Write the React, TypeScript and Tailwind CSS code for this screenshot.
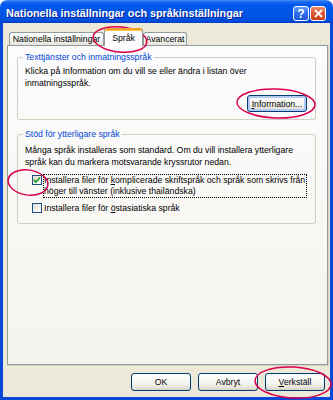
import React from "react";

function Check({ checked }: { checked?: boolean }) {
  return (
    <div className="w-[10px] h-[10px] shrink-0 border border-[#1c5180] bg-[linear-gradient(135deg,#dcdcd7_0%,#f4f4f0_60%,#ffffff_100%)] flex items-center justify-center">
      {checked && (
        <svg width="8" height="8" viewBox="0 0 8 8">
          <path d="M1 4 L3 6 L7 1.5" stroke="#21a121" strokeWidth="1.8" fill="none" />
        </svg>
      )}
    </div>
  );
}

function XPButton({ children, focused }: { children: React.ReactNode; focused?: boolean }) {
  return (
    <div
      className={
        "w-[60px] h-full rounded-[3px] border border-[#003c74] bg-[linear-gradient(to_bottom,#ffffff_0%,#f3f3ef_60%,#e2dfd4_90%,#d6d0c5_100%)] flex items-center justify-center text-black " +
        (focused ? "shadow-[inset_0_0_0_2px_#b3cbf3]" : "")
      }
    >
      {children}
    </div>
  );
}

export default function App() {
  return (
    <div className="relative w-[333px] h-[400px] bg-white font-['Liberation_Sans',Arial,sans-serif] text-[8.7px] leading-[12px] text-black overflow-hidden">
      <div className="flex flex-col w-full h-full">
        {/* Title bar */}
        <div className="h-[23px] shrink-0 rounded-t-[7px] bg-[linear-gradient(to_bottom,#4a8ff5_0%,#1c6cf0_8%,#0058ee_20%,#0055e5_60%,#0050e0_85%,#003fc8_100%)] flex items-start pl-[6px] pr-[7px] pt-[6px]">
          <div className="flex-1 text-white font-bold text-[10.8px] leading-[15px] [text-shadow:1px_1px_0_#0a1e8c] whitespace-nowrap">
            Nationella inställningar och språkinställningar
          </div>
          <div className="flex gap-[1px]">
            <div className="w-[16px] h-[15px] rounded-[3px] border border-white bg-[linear-gradient(to_bottom,#5d9cfa_0%,#2f6ff0_50%,#1d55d8_100%)] flex items-center justify-center text-white font-bold text-[12px] leading-none">
              ?
            </div>
            <div className="w-[16px] h-[15px] rounded-[3px] border border-white bg-[linear-gradient(to_bottom,#eb8a6b_0%,#e05a35_45%,#c93c17_100%)] flex items-center justify-center">
              <svg width="9" height="9" viewBox="0 0 9 9">
                <path d="M1 1 L8 8 M8 1 L1 8" stroke="white" strokeWidth="1.8" />
              </svg>
            </div>
          </div>
        </div>

        {/* Body */}
        <div className="flex-1 flex flex-col bg-[#ece9d8] border-x-[3px] border-b-[3px] border-[#0a48d8] pt-[5px]">
          {/* Tabs */}
          <div className="h-[17px] flex items-end pl-[6px]">
            <div className="w-[95px] h-[13px] rounded-t-[3px] border border-b-0 border-[#919b9c] bg-[linear-gradient(to_bottom,#ffffff_0%,#f3f3ef_60%,#e6e4db_100%)] flex items-center justify-center whitespace-nowrap">
              Nationella inställningar
            </div>
            <div className="relative z-10 -mb-[1px] w-[39px] h-[18px] rounded-t-[3px] border-x border-[#919b9c] border-t-[2px] border-t-[#f0a030] bg-[#fcfcfe] flex items-center justify-center shadow-[inset_0_1px_0_#ffc83c]">
              Språk
            </div>
            <div className="w-[44px] h-[13px] rounded-t-[3px] border border-b-0 border-[#919b9c] bg-[linear-gradient(to_bottom,#ffffff_0%,#f3f3ef_60%,#e6e4db_100%)] flex items-center justify-center">
              Avancerat
            </div>
          </div>

          {/* Panel */}
          <div className="h-[320px] ml-[4px] mr-[2px] border border-[#919b9c] bg-[linear-gradient(to_bottom,#fcfcfe_0%,#f8f7f3_60%,#f4f3ee_100%)] shadow-[1px_1px_0_#d4d1c4] pt-[5px] pl-[9px] pr-[11px] flex flex-col">
            <fieldset className="border border-[#d0d0bf] rounded-[3px] px-[7px] pb-[7px] flex flex-col">
              <legend className="px-[2px] -ml-[2px] text-[#0046d5] leading-[12px]">
                Texttjänster och inmatningsspråk
              </legend>
              <div className="pt-[2px] whitespace-nowrap">
                Klicka på Information om du vill se eller ändra i listan över
                <br />
                inmatningsspråk.
              </div>
              <div className="mt-[6px] h-[17px] self-end mr-[1px]">
                <XPButton focused>
                  <span>
                    <span className="underline">I</span>nformation...
                  </span>
                </XPButton>
              </div>
            </fieldset>

            <fieldset className="mt-[8px] border border-[#d0d0bf] rounded-[3px] px-[7px] pb-[8px] flex flex-col">
              <legend className="px-[2px] -ml-[2px] text-[#0046d5] leading-[12px]">
                Stöd för ytterligare språk
              </legend>
              <div className="pt-[4px] whitespace-nowrap">
                Många språk installeras som standard. Om du vill installera ytterligare
                <br />
                språk kan du markera motsvarande kryssrutor nedan.
              </div>
              <div className="mt-[6px] ml-[7px] flex items-start">
                <div className="mt-[1px]">
                  <Check checked />
                </div>
                <div className="ml-[1px] mr-[1px] flex-1 border border-dotted border-black whitespace-nowrap leading-[11px] py-[0px]">
                  Installera filer för <span className="underline">k</span>omplicerade skriftspråk och språk som skrivs från
                  <br />
                  höger till vänster (inklusive thailändska)
                </div>
              </div>
              <div className="mt-[4px] ml-[7px] flex items-start">
                <div className="mt-[1px]">
                  <Check />
                </div>
                <div className="ml-[1px] border border-transparent whitespace-nowrap leading-[11px]">
                  Installera filer för <span className="underline">ö</span>stasiatiska språk
                </div>
              </div>
            </fieldset>
          </div>

          {/* Bottom buttons */}
          <div className="mt-[8px] h-[18px] flex justify-end gap-[7px] pr-[5px]">
            <XPButton>OK</XPButton>
            <XPButton>Avbryt</XPButton>
            <XPButton>
              <span>
                <span className="underline">V</span>erkställ
              </span>
            </XPButton>
          </div>
        </div>
      </div>

      {/* Red annotation ellipses */}
      <svg className="absolute inset-0 pointer-events-none" width="333" height="400" viewBox="0 0 333 400">
        <g fill="none" stroke="#d9004c" strokeWidth="1.5">
          <ellipse cx="120" cy="39.5" rx="27" ry="12.5" transform="rotate(6 120 39.5)" />
          <ellipse cx="276" cy="103.5" rx="39" ry="14.5" transform="rotate(2 276 103.5)" />
          <ellipse cx="28" cy="182.5" rx="20" ry="12.5" transform="rotate(8 28 182.5)" />
          <ellipse cx="293" cy="382.5" rx="38" ry="15.5" transform="rotate(3 293 382.5)" />
        </g>
      </svg>
    </div>
  );
}
